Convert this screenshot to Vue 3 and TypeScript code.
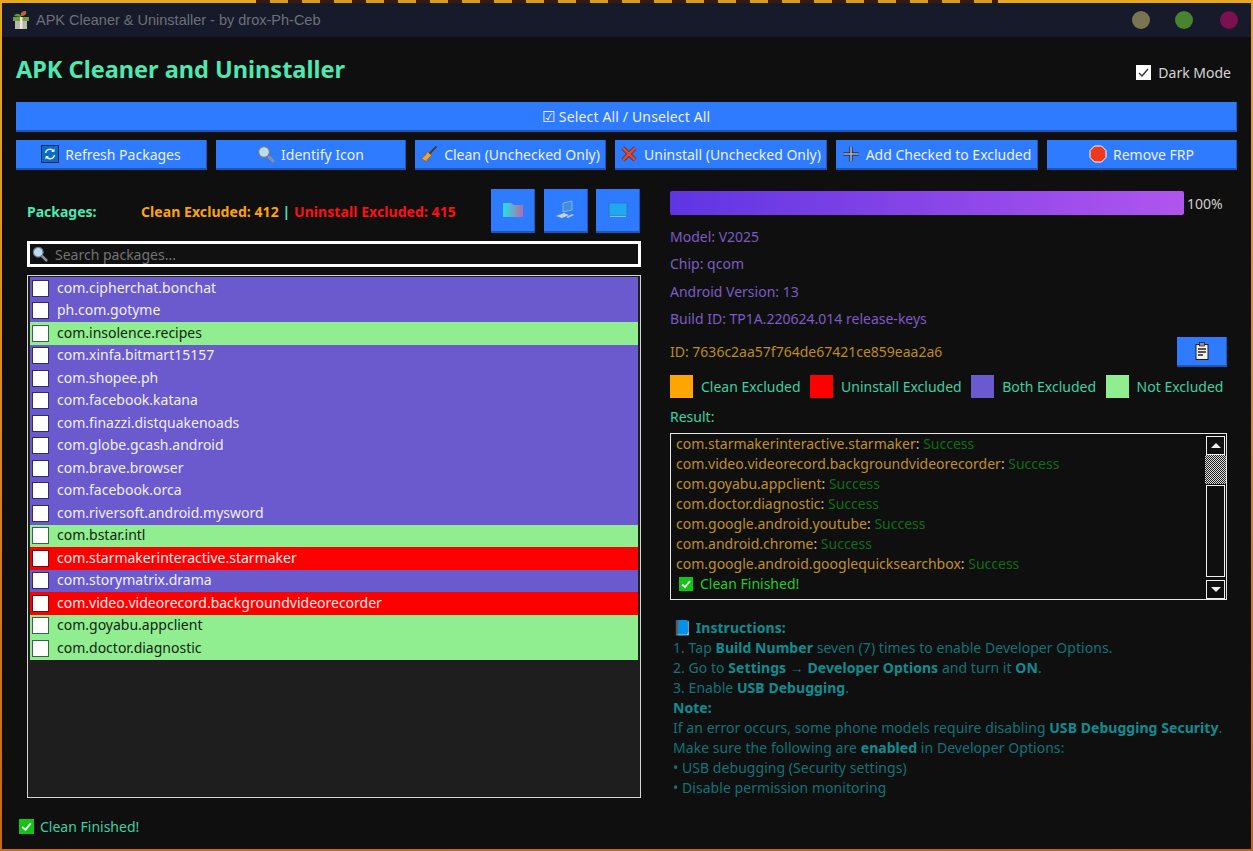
<script setup lang="ts">
type Row = { name: string; kind: 'both' | 'none' | 'red' }

const rows: Row[] = [
  { name: 'com.cipherchat.bonchat', kind: 'both' },
  { name: 'ph.com.gotyme', kind: 'both' },
  { name: 'com.insolence.recipes', kind: 'none' },
  { name: 'com.xinfa.bitmart15157', kind: 'both' },
  { name: 'com.shopee.ph', kind: 'both' },
  { name: 'com.facebook.katana', kind: 'both' },
  { name: 'com.finazzi.distquakenoads', kind: 'both' },
  { name: 'com.globe.gcash.android', kind: 'both' },
  { name: 'com.brave.browser', kind: 'both' },
  { name: 'com.facebook.orca', kind: 'both' },
  { name: 'com.riversoft.android.mysword', kind: 'both' },
  { name: 'com.bstar.intl', kind: 'none' },
  { name: 'com.starmakerinteractive.starmaker', kind: 'red' },
  { name: 'com.storymatrix.drama', kind: 'both' },
  { name: 'com.video.videorecord.backgroundvideorecorder', kind: 'red' },
  { name: 'com.goyabu.appclient', kind: 'none' },
  { name: 'com.doctor.diagnostic', kind: 'none' },
]

const results = [
  'com.starmakerinteractive.starmaker',
  'com.video.videorecord.backgroundvideorecorder',
  'com.goyabu.appclient',
  'com.doctor.diagnostic',
  'com.google.android.youtube',
  'com.android.chrome',
  'com.google.android.googlequicksearchbox',
]

const legend = [
  { label: 'Clean Excluded', color: '#ffa500' },
  { label: 'Uninstall Excluded', color: '#ff0000' },
  { label: 'Both Excluded', color: '#6a5acd' },
  { label: 'Not Excluded', color: '#90ee90' },
]
</script>

<template>
  <div class="window">
    <header class="titlebar">
      <svg class="app-icon" width="18" height="20" viewBox="0 0 18 20">
        <path d="M9 6 C8 3 10 1 14 1 C15 4 13 6 9 6Z" fill="#b5673a" />
        <path d="M9 6 C7 3 4 3 2 6 L9 7Z" fill="#5f9a3a" />
        <rect x="1" y="7" width="16" height="4" fill="#6d9e42" />
        <rect x="3" y="11" width="12" height="8" fill="#b9b9a8" />
        <rect x="8" y="7" width="2.5" height="12" fill="#e8e8dc" />
      </svg>
      <span class="window-title">APK Cleaner &amp; Uninstaller - by drox-Ph-Ceb</span>
      <div class="window-dots">
        <i class="dot dot-min"></i>
        <i class="dot dot-max"></i>
        <i class="dot dot-close"></i>
      </div>
    </header>

    <main class="content">
      <div class="top">
        <h1>APK Cleaner and Uninstaller</h1>
        <label class="dark-mode">
          <span class="box box-dark">
            <svg width="13" height="13" viewBox="0 0 13 13"><path d="M2 7 L5 10 L11 3" fill="none" stroke="#333" stroke-width="1.4" /></svg>
          </span>
          Dark Mode
        </label>
      </div>

      <button class="btn btn-wide"><span class="wide-check">☑</span> Select All / Unselect All</button>

      <div class="actions">
        <button class="btn">
          <svg width="18" height="18" viewBox="0 0 18 18">
            <rect x="0.5" y="0.5" width="17" height="17" fill="#0a6cc4" stroke="#0b2a55" />
            <path d="M4.5 8 A4.5 4.5 0 0 1 12.5 6 M13.5 10 A4.5 4.5 0 0 1 5.5 12" fill="none" stroke="#e4f3ff" stroke-width="1.5" />
            <path d="M13.5 3.5 V7 H10Z M4.5 14.5 V11 H8Z" fill="#e4f3ff" />
          </svg>
          Refresh Packages
        </button>
        <button class="btn">
          <svg width="18" height="18" viewBox="0 0 18 18">
            <path d="M10.5 10.5 L16 16" stroke="#8b8f96" stroke-width="3" stroke-linecap="round" />
            <circle cx="7" cy="7" r="5.5" fill="#b9dcf5" stroke="#6f7780" stroke-width="1.3" />
          </svg>
          Identify Icon
        </button>
        <button class="btn">
          <svg width="18" height="18" viewBox="0 0 18 18">
            <path d="M16.5 1.5 L9 9" stroke="#4a3a2a" stroke-width="1.8" />
            <path d="M7.5 6.5 L11.5 10.5 L6 16.5 L1 13.5 C4 12.5 6 9 7.5 6.5Z" fill="#e8a33c" stroke="#7d5418" stroke-width="0.7" />
          </svg>
          Clean (Unchecked Only)
        </button>
        <button class="btn">
          <svg width="18" height="18" viewBox="0 0 18 18">
            <path d="M3 3 L15 15 M15 3 L3 15" stroke="#3a2f3a" stroke-width="4.2" />
            <path d="M3 3 L15 15 M15 3 L3 15" stroke="#e8482a" stroke-width="2.8" />
          </svg>
          Uninstall (Unchecked Only)
        </button>
        <button class="btn">
          <svg width="18" height="18" viewBox="0 0 18 18">
            <path d="M9 1.5 V16.5 M1.5 9 H16.5" stroke="#2b3038" stroke-width="3.4" />
            <path d="M9 1.5 V16.5 M1.5 9 H16.5" stroke="#a9b2bd" stroke-width="1.6" />
          </svg>
          Add Checked to Excluded
        </button>
        <button class="btn">
          <svg width="18" height="18" viewBox="0 0 18 18">
            <path d="M5.5 1 H12.5 L17 5.5 V12.5 L12.5 17 H5.5 L1 12.5 V5.5Z" fill="#ee3a1c" stroke="#fff" stroke-width="1" />
          </svg>
          Remove FRP
        </button>
      </div>

      <div class="columns">
        <section class="left">
          <div class="pkg-head">
            <strong class="pkg-label">Packages:</strong>
            <strong class="pkg-stats">
              <span class="orange">Clean Excluded: 412</span>
              <span class="teal"> | </span>
              <span class="red">Uninstall Excluded: 415</span>
            </strong>
            <div class="icon-btns">
              <button class="btn btn-icon">
                <svg width="20" height="16" viewBox="0 0 20 16">
                  <defs>
                    <linearGradient id="folderFill" x1="0" y1="0" x2="1" y2="0">
                      <stop offset="0" stop-color="#1fe3ea" />
                      <stop offset="1" stop-color="#b86aa8" />
                    </linearGradient>
                  </defs>
                  <path d="M0 1 H8 L11 3 H20 V15 H0Z" fill="url(#folderFill)" />
                </svg>
              </button>
              <button class="btn btn-icon">
                <svg width="20" height="20" viewBox="0 0 20 20">
                  <path d="M8 3 L17 1 V10 L8 12Z" fill="#3f8fe0" stroke="#9fbce0" stroke-width="0.8" />
                  <path d="M1 16 L9 13 L14 15 L7 18Z" fill="#c9d3e0" />
                  <path d="M11 17 L17 14 L19 15 L13 18Z" fill="#b9c4d2" />
                </svg>
              </button>
              <button class="btn btn-icon">
                <svg width="20" height="16" viewBox="0 0 20 16">
                  <rect x="1" y="1" width="18" height="13" fill="#22a8ee" stroke="#2a6cc0" stroke-width="0.7" />
                  <rect x="2" y="14" width="16" height="1" fill="#7fc0ec" />
                </svg>
              </button>
            </div>
          </div>

          <div class="search">
            <svg width="16" height="16" viewBox="0 0 18 18">
              <path d="M10.5 10.5 L16 16" stroke="#8b8f96" stroke-width="3" stroke-linecap="round" />
              <circle cx="7" cy="7" r="5.5" fill="#b9dcf5" stroke="#6f7780" stroke-width="1.3" />
            </svg>
            <span>Search packages...</span>
          </div>

          <div class="list">
            <div v-for="row in rows" :key="row.name" class="row" :class="`row-${row.kind}`">
              <span class="box box-row"></span>
              <span class="row-name">{{ row.name }}</span>
            </div>
          </div>
        </section>

        <section class="right">
          <div class="progress-line">
            <div class="progress"></div>
            <span class="percent">100%</span>
          </div>

          <div class="info-block">
            <div class="info">Model: V2025</div>
            <div class="info">Chip: qcom</div>
            <div class="info">Android Version: 13</div>
            <div class="info">Build ID: TP1A.220624.014 release-keys</div>
          </div>

          <div class="id-line">
            <span>ID: 7636c2aa57f764de67421ce859eaa2a6</span>
            <button class="btn btn-clip">
              <svg width="14" height="18" viewBox="0 0 14 18">
                <rect x="1" y="2.5" width="12" height="15" fill="#f2f2ea" stroke="#1c1c24" />
                <rect x="4.5" y="0.5" width="5" height="3.5" fill="#8d8f96" stroke="#1c1c24" stroke-width="0.7" />
                <path d="M3 7 H11 M3 10 H11 M3 13 H8" stroke="#22222a" stroke-width="1.5" />
              </svg>
            </button>
          </div>

          <div class="legend">
            <div v-for="item in legend" :key="item.label" class="legend-item">
              <i class="swatch" :style="{ background: item.color }"></i>
              <span>{{ item.label }}</span>
            </div>
          </div>

          <div class="result-label">Result:</div>
          <div class="result">
            <div class="result-text">
              <div v-for="name in results" :key="name">
                <span class="gold">{{ name }}</span><span class="colon">:</span> <span class="green">Success</span>
              </div>
              <div class="finished">
                <span class="tick tick-small">
                  <svg width="12" height="12" viewBox="0 0 12 12"><path d="M2 6.5 L5 9 L10 3" fill="none" stroke="#fff" stroke-width="1.8" /></svg>
                </span>
                Clean Finished!
              </div>
            </div>
            <div class="scrollbar">
              <span class="sb-btn"><i class="arrow-up"></i></span>
              <span class="sb-thumb"></span>
              <span class="sb-track"></span>
              <span class="sb-btn"><i class="arrow-down"></i></span>
            </div>
          </div>

          <div class="instructions">
            <div><span class="book">📘</span> <b>Instructions:</b></div>
            <div>1. Tap <b>Build Number</b> seven (7) times to enable Developer Options.</div>
            <div>2. Go to <b>Settings</b> → <b>Developer Options</b> and turn it <b>ON</b>.</div>
            <div>3. Enable <b>USB Debugging</b>.</div>
            <div><b>Note:</b></div>
            <div>If an error occurs, some phone models require disabling <b>USB Debugging Security</b>.</div>
            <div>Make sure the following are <b>enabled</b> in Developer Options:</div>
            <div>• USB debugging (Security settings)</div>
            <div>• Disable permission monitoring</div>
          </div>
        </section>
      </div>

      <div class="status">
        <span class="tick">
          <svg width="13" height="13" viewBox="0 0 12 12"><path d="M2 6.5 L5 9 L10 3" fill="none" stroke="#fff" stroke-width="1.8" /></svg>
        </span>
        Clean Finished!
      </div>
    </main>
  </div>
</template>

<style>
html,
body {
  margin: 0;
  height: 851px;
  overflow: hidden;
  background:
    repeating-linear-gradient(90deg, #3a1a0a 0 14px, #d99a20 14px 32px) 256px 0 / 742px 3px no-repeat,
    linear-gradient(90deg, #c86f14, #b8660f) 0 848px / 100% 3px no-repeat,
    linear-gradient(180deg, #e8a81c, #d98a18 50%, #c8680f);
}
</style>

<style scoped>
.window {
  box-sizing: border-box;
  width: 1249px;
  height: 846px;
  margin: 3px 2px 2px;
  display: flex;
  flex-direction: column;
  background: #0f0f10;
  font-family: "Noto Sans", "Open Sans", sans-serif;
  font-size: 14px;
  color: #e0e0e0;
}
.titlebar {
  flex: none;
  height: 34px;
  display: flex;
  align-items: center;
  padding: 0 13px 0 10px;
  background: #171a2b;
  font-family: "Liberation Sans", Arial, sans-serif;
}
.app-icon {
  margin-right: 6px;
}
.window-title {
  color: #6d7078;
  font-size: 14.5px;
}
.window-dots {
  margin-left: auto;
  display: flex;
  align-items: center;
}
.dot {
  width: 18px;
  height: 18px;
  border-radius: 50%;
}
.dot-min {
  background: #7b7450;
  margin-right: 25px;
}
.dot-max {
  background: #48832f;
  margin-right: 27px;
}
.dot-close {
  background: #7c1150;
}
.content {
  flex: 1;
  min-height: 0;
  padding: 0 14px;
  display: flex;
  flex-direction: column;
}
.top {
  height: 65px;
  display: flex;
  align-items: center;
  justify-content: space-between;
}
h1 {
  margin: 0 0 2px;
  font-size: 23.5px;
  font-weight: 700;
  color: #4ee8b0;
}
.dark-mode {
  display: flex;
  align-items: center;
  gap: 7px;
  margin: 5px 6px 0 0;
  color: #d6d6d6;
}
.box {
  flex: none;
  box-sizing: border-box;
  width: 15px;
  height: 15px;
  background: #fff;
  display: inline-flex;
  align-items: center;
  justify-content: center;
}
.box-row {
  outline: 1px solid rgba(20, 20, 40, 0.65);
}
.btn {
  box-sizing: border-box;
  border: none;
  border-bottom: 2px solid #1b57b8;
  border-right: 1px solid #1b57b8;
  background: #2f7bff;
  color: #e9f1ff;
  font: inherit;
  display: inline-flex;
  align-items: center;
  justify-content: center;
  gap: 6px;
  padding: 0;
}
.btn-wide {
  width: 100%;
  height: 30px;
  gap: 4px;
  letter-spacing: 0.15px;
}
.wide-check {
  font-size: 15px;
}
.actions {
  display: grid;
  grid-template-columns: 191px 190px 191px 212px 202px 190px;
  column-gap: 9px;
  margin-top: 8px;
}
.actions .btn {
  height: 30px;
}
.columns {
  margin-top: 18px;
  display: flex;
  height: 610px;
}
.left {
  width: 614px;
  margin-left: 11px;
  display: flex;
  flex-direction: column;
}
.pkg-head {
  height: 45px;
  display: flex;
  align-items: center;
}
.pkg-label {
  width: 114px;
  color: #4ee8b0;
  margin-top: 2px;
}
.pkg-stats {
  width: 350px;
  white-space: pre-wrap;
  letter-spacing: 0.07px;
  margin-top: 2px;
}
.orange {
  color: #ffa500;
}
.red {
  color: #ff1010;
}
.teal {
  color: #4ee8b0;
}
.icon-btns {
  display: flex;
  gap: 8.5px;
}
.btn-icon {
  width: 44px;
  height: 44px;
}
.search {
  box-sizing: border-box;
  margin-top: 8px;
  height: 26px;
  border: 3px solid #fff;
  background: #111;
  display: flex;
  align-items: center;
  gap: 7px;
  padding-left: 2px;
  color: #737373;
}
.list {
  box-sizing: border-box;
  margin-top: 8px;
  height: 523px;
  border: 1px solid #d6d6d6;
  background: #1e1e1e;
  padding: 1px 2px;
}
.row {
  height: 22.5px;
  display: flex;
  align-items: center;
  gap: 9px;
  padding-left: 3px;
}
.row-name {
  margin-bottom: 2px;
}
.row-both {
  background: #6a5acd;
  color: #f2f0ff;
}
.row-none {
  background: #90ee90;
  color: #10240f;
}
.row-red {
  background: #ff0000;
  color: #ffecec;
}
.right {
  margin-left: 29px;
  width: 557px;
  display: flex;
  flex-direction: column;
}
.progress-line {
  height: 24px;
  margin-top: 3px;
  display: flex;
  align-items: center;
  gap: 3px;
}
.progress {
  width: 514px;
  height: 24px;
  border-radius: 2px;
  background: linear-gradient(90deg, #5f35e2, #b055ee);
}
.percent {
  color: #cfcfcf;
}
.info-block {
  margin-top: 8px;
}
.info {
  height: 27.4px;
  line-height: 27.4px;
  color: #7b5cc4;
}
.id-line {
  display: flex;
  align-items: center;
  justify-content: space-between;
  height: 30px;
  margin-top: 4px;
  color: #bd8a1f;
}
.btn-clip {
  width: 50px;
  height: 30px;
}
.legend {
  display: flex;
  gap: 9.5px;
  margin-top: 8px;
  height: 24px;
  color: #3fcfa2;
}
.legend-item {
  display: flex;
  align-items: center;
  gap: 8px;
}
.swatch {
  width: 23px;
  height: 23px;
}
.result-label {
  margin-top: 8px;
  height: 20px;
  color: #3fcfa2;
}
.result {
  box-sizing: border-box;
  margin-top: 6px;
  height: 167px;
  border: 1px solid #e6e6e6;
  display: flex;
  justify-content: space-between;
}
.result-text {
  padding: 0 0 0 5px;
  line-height: 20px;
}
.gold {
  color: #c0902a;
}
.colon {
  color: #c9bfa0;
}
.green {
  color: #0f6e18;
}
.finished {
  display: flex;
  align-items: center;
  gap: 7px;
  padding-left: 3px;
  color: #1fd01f;
}
.scrollbar {
  width: 21px;
  display: flex;
  flex-direction: column;
  padding-top: 2px;
  box-sizing: border-box;
}
.sb-btn {
  box-sizing: border-box;
  width: 19px;
  height: 19px;
  margin-left: 1px;
  border: 1px solid #f0f0f0;
  display: flex;
  align-items: center;
  justify-content: center;
  flex: none;
}
.sb-thumb {
  height: 29px;
  flex: none;
  background: repeating-conic-gradient(#ddd 0 25%, #222 0 50%) 0 0 / 2px 2px;
}
.sb-track {
  box-sizing: border-box;
  flex: 1;
  margin: 1px 0 3px 1px;
  width: 19px;
  border: 1px solid #f0f0f0;
}
.arrow-up,
.arrow-down {
  width: 0;
  height: 0;
  border-left: 5px solid transparent;
  border-right: 5px solid transparent;
}
.arrow-up {
  border-bottom: 5px solid #eee;
}
.arrow-down {
  border-top: 5px solid #eee;
}
.tick {
  flex: none;
  width: 15px;
  height: 15px;
  background: #14c414;
  display: inline-flex;
  align-items: center;
  justify-content: center;
}
.tick-small {
  width: 14px;
  height: 14px;
}
.instructions {
  margin-top: 18px;
  padding-left: 3px;
  line-height: 20px;
  color: #0f7478;
  white-space: nowrap;
  letter-spacing: 0.05px;
}
.instructions b {
  color: #0f8c90;
}
.book {
  font-size: 15px;
  line-height: 1;
}
.status {
  display: flex;
  align-items: center;
  gap: 6px;
  margin: 16px 0 0 3px;
  height: 24px;
  color: #3fcfa2;
}
</style>
